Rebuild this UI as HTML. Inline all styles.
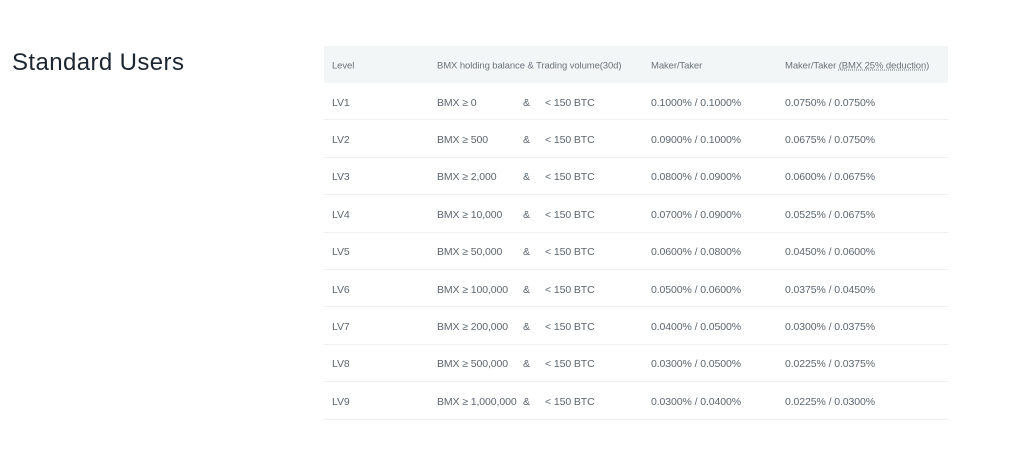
<!DOCTYPE html>
<html><head><meta charset="utf-8"><style>
body{margin:0;width:1020px;height:470px;background:#fff;font-family:"Liberation Sans",sans-serif;position:relative;overflow:hidden}
h1{position:absolute;left:12px;top:49px;margin:0;font-size:24px;font-weight:normal;color:#1c2630;letter-spacing:0.4px}
.t{position:absolute;left:324px;top:46px;width:624px}
.r{position:relative;height:37.4px;border-bottom:1px solid #edf0f0;box-sizing:border-box;font-size:10.5px;color:#5c6670;letter-spacing:-0.1px}
.h{background:#f3f6f6;border:none;height:37px;font-size:9.5px;color:#6a737b}
.r span{position:absolute;top:calc(50% + 1.5px);transform:translateY(-50%);white-space:nowrap}
.a{left:8px}.b{left:113px}.c{left:199px}.d{left:221px}.e{left:327px}.f{left:461px}
u{text-decoration:underline dotted}
</style></head><body>
<h1>Standard Users</h1>
<div class="t">
<div class="r h"><span class="a">Level</span><span class="b">BMX holding balance &amp; Trading volume(30d)</span><span class="e">Maker/Taker</span><span class="f">Maker/Taker <u>(BMX 25% deduction)</u></span></div>
<div class="r"><span class="a">LV1</span><span class="b">BMX ≥ 0</span><span class="c">&amp;</span><span class="d">&lt; 150 BTC</span><span class="e">0.1000% / 0.1000%</span><span class="f">0.0750% / 0.0750%</span></div>
<div class="r"><span class="a">LV2</span><span class="b">BMX ≥ 500</span><span class="c">&amp;</span><span class="d">&lt; 150 BTC</span><span class="e">0.0900% / 0.1000%</span><span class="f">0.0675% / 0.0750%</span></div>
<div class="r"><span class="a">LV3</span><span class="b">BMX ≥ 2,000</span><span class="c">&amp;</span><span class="d">&lt; 150 BTC</span><span class="e">0.0800% / 0.0900%</span><span class="f">0.0600% / 0.0675%</span></div>
<div class="r"><span class="a">LV4</span><span class="b">BMX ≥ 10,000</span><span class="c">&amp;</span><span class="d">&lt; 150 BTC</span><span class="e">0.0700% / 0.0900%</span><span class="f">0.0525% / 0.0675%</span></div>
<div class="r"><span class="a">LV5</span><span class="b">BMX ≥ 50,000</span><span class="c">&amp;</span><span class="d">&lt; 150 BTC</span><span class="e">0.0600% / 0.0800%</span><span class="f">0.0450% / 0.0600%</span></div>
<div class="r"><span class="a">LV6</span><span class="b">BMX ≥ 100,000</span><span class="c">&amp;</span><span class="d">&lt; 150 BTC</span><span class="e">0.0500% / 0.0600%</span><span class="f">0.0375% / 0.0450%</span></div>
<div class="r"><span class="a">LV7</span><span class="b">BMX ≥ 200,000</span><span class="c">&amp;</span><span class="d">&lt; 150 BTC</span><span class="e">0.0400% / 0.0500%</span><span class="f">0.0300% / 0.0375%</span></div>
<div class="r"><span class="a">LV8</span><span class="b">BMX ≥ 500,000</span><span class="c">&amp;</span><span class="d">&lt; 150 BTC</span><span class="e">0.0300% / 0.0500%</span><span class="f">0.0225% / 0.0375%</span></div>
<div class="r"><span class="a">LV9</span><span class="b">BMX ≥ 1,000,000</span><span class="c">&amp;</span><span class="d">&lt; 150 BTC</span><span class="e">0.0300% / 0.0400%</span><span class="f">0.0225% / 0.0300%</span></div>
</div>
</body></html>
